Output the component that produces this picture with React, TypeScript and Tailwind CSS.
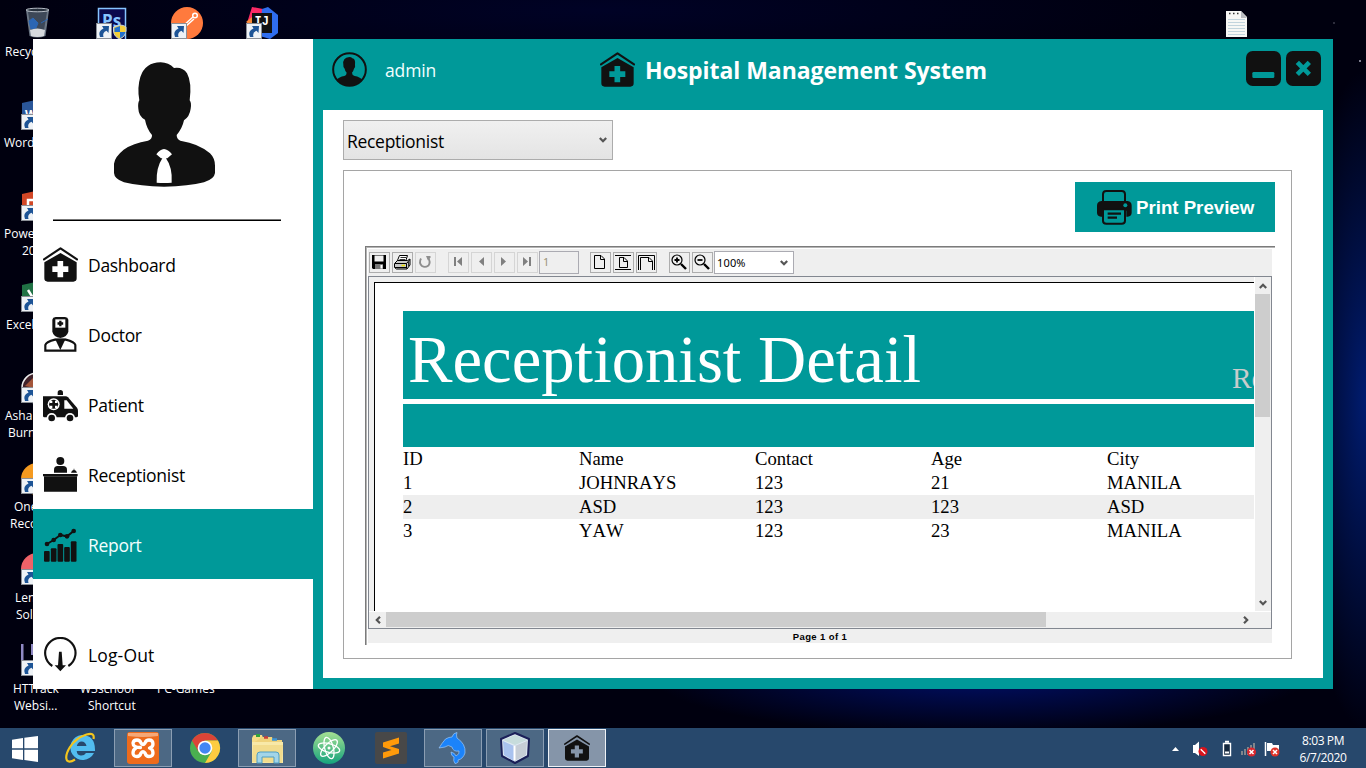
import type { ReactNode } from 'react'

const INK = '#111111'

function HouseIcon({ size = 35 }: { size?: number }) {
  return (
    <svg width={size} height={size} viewBox="0 0 105 105" className="shrink-0">
      <path d="M3 37 L52.5 4 L102 37" fill="none" stroke={INK} strokeWidth="6.500" strokeLinejoin="round" strokeLinecap="round" />
      <path
        fillRule="evenodd"
        fill={INK}
        d="M4 46 L52.5 18 L101 46 V94 Q101 104 91 104 H14 Q4 104 4 94 Z M43.5 42 V58 H28 V75 H43.5 V91 H60.5 V75 H76 V58 H60.5 V42 Z"
      />
    </svg>
  )
}

function DoctorIcon() {
  return (
    <svg width="35" height="35" viewBox="0 0 105 105" className="shrink-0">
      <path d="M28 8 Q29 1 38 0 H66 Q75 1 76 8 V44 Q72 60 52 63 Q32 60 28 44 Z" fill={INK} />
      <path d="M37 7 H67 V32 H37 Z" fill="#fff" />
      <path d="M52 11 V28 M43.500 19.500 H60.500" stroke={INK} strokeWidth="7" />
      <path d="M7 101 V84 Q9 75 36 68 H68 Q95 75 97 84 V101 Z" fill="#fff" stroke={INK} strokeWidth="6.500" />
      <path d="M36 65 H68 L52 99 Z" fill={INK} />
    </svg>
  )
}

function AmbulanceIcon() {
  return (
    <svg width="35" height="35" viewBox="0 0 105 105" className="shrink-0">
      <path d="M44 24 V17 Q44 9 52 9 Q60 9 60 17 V24 Z" fill={INK} />
      <path d="M0 28 H68 Q72 28 75 31 L102 62 Q105 66 105 72 V86 Q105 91 100 91 H4 Q0 91 0 86 Z" fill={INK} />
      <path d="M64 40 H71 L91 65 H64 Z" fill="#fff" />
      <circle cx="32" cy="52" r="18" fill="#fff" />
      <circle cx="32" cy="52" r="13.500" fill={INK} />
      <path d="M21 41 h7 v7 h-7 z M36 41 h7 v7 h-7 z M21 56 h7 v7 h-7 z M36 56 h7 v7 h-7 z" fill="#fff" />
      <circle cx="26" cy="93" r="15" fill="#fff" />
      <circle cx="81" cy="93" r="15" fill="#fff" />
      <circle cx="26" cy="93" r="10" fill={INK} />
      <circle cx="81" cy="93" r="10" fill={INK} />
    </svg>
  )
}

function DeskIcon() {
  return (
    <svg width="35" height="35" viewBox="0 0 105 105" className="shrink-0" fill={INK}>
      <circle cx="52" cy="12" r="12" />
      <path d="M33 47 V38 Q33 27 44 27 H60 Q72 27 72 38 V47 Z" />
      <path d="M84 47 Q86 40 92 39 V35 H94 V39 Q100 40 102 47 Z" />
      <path d="M0 51 H104 V58 H102 V104 H3 V58 H0 Z" />
      <path d="M3 58.500 H102" stroke="#666" strokeWidth="1.500" />
    </svg>
  )
}

function ChartIcon() {
  return (
    <svg width="35" height="35" viewBox="0 0 105 105" className="shrink-0" fill={INK}>
      <rect x="3" y="72" width="17" height="32" rx="3" />
      <rect x="23.500" y="64" width="17" height="40" rx="3" />
      <rect x="43.500" y="51" width="17" height="53" rx="3" />
      <rect x="63.500" y="60" width="17" height="44" rx="3" />
      <rect x="83.500" y="43" width="17" height="61" rx="3" />
      <path d="M12 51 L32 39 L52 24 L72 28 L92 12" fill="none" stroke={INK} strokeWidth="6" />
      <circle cx="12" cy="51" r="7" />
      <circle cx="32" cy="39" r="7" />
      <circle cx="52" cy="24" r="7" />
      <circle cx="72" cy="28" r="7" />
      <circle cx="92" cy="12" r="7" />
    </svg>
  )
}

function LogoutIcon() {
  return (
    <svg width="35" height="35" viewBox="0 0 105 105" className="shrink-0">
      <path d="M28 87 A45.500 45.500 0 1 1 76 87" fill="none" stroke={INK} strokeWidth="6.500" />
      <path d="M48 44 H56 L59 85 H69 L52 103 L35 85 H45 Z" fill={INK} />
    </svg>
  )
}

function AvatarIcon() {
  return (
    <svg width="101" height="125" viewBox="342 185 303 375">
      <path
        fill={INK}
        d="M418 300 Q411 262 421 230 Q436 186 482 186 Q506 187 522 203 Q548 199 561 219 Q576 246 569 300 Q575 307 572 325 Q569 348 552 360 Q547 384 530 404 Q530 416 541 421 Q598 430 630 459 Q645 474 645 496 V518 Q643 536 612 546 Q566 558 492 559 Q420 558 372 546 Q343 536 342 518 V490 Q344 470 371 448 Q399 428 444 421 Q457 416 456 404 Q440 385 435 358 Q416 348 415 325 Q413 308 418 300 Z"
      />
      <path fill="#fff" d="M469 462 Q480 447 492 446 Q504 447 516 462 L502 474 H483 Z M487 474 H498 Q518 502 515 547 Q492 549 470 547 Q468 502 487 474 Z" />
    </svg>
  )
}

function UserIcon() {
  return (
    <svg width="35" height="35" viewBox="0 0 105 105" className="shrink-0">
      <circle cx="52.500" cy="52.500" r="49" fill="none" stroke={INK} strokeWidth="6" />
      <path
        fill={INK}
        d="M34 38 Q31 17 52 15 Q58 15 61 19 Q71 20 69 38 Q71 46 66 50 Q64 58 60 62 Q60 70 68 72 Q84 75 91 83 Q76 101 52 101 Q29 101 14 83 Q21 75 37 72 Q44 70 44 62 Q39 57 38 50 Q33 46 34 38 Z"
      />
    </svg>
  )
}

function PrinterIcon() {
  return (
    <svg width="35" height="35" viewBox="0 0 105 105" className="shrink-0">
      <path d="M18 40 V13 Q18 3 28 3 H74 Q84 3 84 13 V40" fill="none" stroke={INK} strokeWidth="6" />
      <path d="M13 33 H92 Q104 35 104 47 V68 Q104 78 92 80 H88 V62 H15 V80 H12 Q0 78 0 68 V47 Q0 35 13 33 Z" fill={INK} />
      <path d="M18 58 V92 Q18 101 28 101 H74 Q84 101 84 92 V58 Z" fill="#009999" stroke={INK} strokeWidth="6" />
      <circle cx="85" cy="46" r="6" fill="#009999" />
      <path d="M32 71 H72 M32 83 H60" stroke={INK} strokeWidth="7" />
    </svg>
  )
}

const NAV: { label: string; icon: ReactNode; active?: boolean }[] = [
  { label: 'Dashboard', icon: <HouseIcon /> },
  { label: 'Doctor', icon: <DoctorIcon /> },
  { label: 'Patient', icon: <AmbulanceIcon /> },
  { label: 'Receptionist', icon: <DeskIcon /> },
  { label: 'Report', icon: <ChartIcon />, active: true },
]

function NavItem({ label, icon, active }: { label: string; icon: ReactNode; active?: boolean }) {
  return (
    <div className={active ? 'flex h-[70px] bg-[#009999] pl-[10px] text-[#f2ffff]' : 'flex h-[70px] pl-[10px] text-black'}>
      <div className="pt-[18px]">{icon}</div>
      <span className={label === 'Log-Out' ? 'pt-[24px] pl-[10px] text-[17.500px] leading-[25px] tracking-[0.150px]' : 'pt-[24px] pl-[10px] text-[17.500px] leading-[25px] tracking-[-0.300px]'}>{label}</span>
    </div>
  )
}

function ToolButton({ children, off }: { children: ReactNode; off?: boolean }) {
  return (
    <div className={off ? 'size-[21px] border border-[#d5d5d5]' : 'size-[21px] border border-[#adadad]'}>
      <svg width="19" height="19" viewBox="1 1 19 19" className="block">
        {children}
      </svg>
    </div>
  )
}

function Toolbar() {
  return (
    <div className="flex h-[27px] items-center bg-[#efefef] pl-px">
      <div className="flex gap-[2px]">
        <ToolButton>
          <path d="M3 3 H17 V17 H4 L3 16 Z" fill="#000" />
          <path d="M5.500 3.500 H14.500 V9.500 H5.500 Z" fill="#efefef" />
          <path d="M6 12 H14 V17 H6 Z" fill="#777" />
          <path d="M11.500 13 H13.500 V16.500 H11.500 Z" fill="#fff" />
        </ToolButton>
        <ToolButton>
          <path d="M7.500 3.500 H15.500 L13.500 9.500 H5 Z" fill="#fff" stroke="#000" />
          <path d="M8.500 5.500 H14 M7.500 7.500 H13" stroke="#000" strokeWidth="0.800" />
          <path d="M2.500 11.500 L5.500 8.500 H15.500 L18 7 V13 L15 17 H4.500 L2.500 15.500 Z" fill="#c8c8c8" stroke="#000" />
          <path d="M3 11.500 H14.500 M3 15.500 H14.500 M14.500 11.500 V16.500 M14.500 11.500 L17.500 8" stroke="#000" />
          <path d="M9.500 13.500 H13" stroke="#e8e000" strokeWidth="1.500" />
          <path d="M16.500 9 V14.500" stroke="#333" />
        </ToolButton>
        <ToolButton off>
          <path d="M6 6.500 Q3.500 11 7 14 Q10 16 13.500 13.500 Q16 10 13 5.500" fill="none" stroke="#8e8e8e" strokeWidth="1.900" />
          <path d="M11 4 H15.500 V5.500 L13 8.500 Z" fill="#8e8e8e" />
        </ToolButton>
      </div>
      <div className="ml-3 flex gap-[2px]">
        <ToolButton off>
          <path d="M6 5 H8 V14 H6 Z M14 5 V14 L9 9.500 Z" fill="#808080" />
        </ToolButton>
        <ToolButton off>
          <path d="M13 5 V14 L8 9.500 Z" fill="#808080" />
        </ToolButton>
        <ToolButton off>
          <path d="M7 5 V14 L12 9.500 Z" fill="#808080" />
        </ToolButton>
        <ToolButton off>
          <path d="M6 5 V14 L11 9.500 Z M12 5 H14 V14 H12 Z" fill="#808080" />
        </ToolButton>
      </div>
      <div className="ml-px h-[23px] w-[40px] border border-[#ababb2] bg-[#efefef] pl-[3px] font-['Noto_Sans',sans-serif] text-[11px] leading-[20px] text-[#9b9478]">1</div>
      <div className="ml-[11px] flex gap-[2px]">
        <ToolButton>
          <path d="M4.500 3.500 H11 L14.500 7 V16.500 H4.500 Z" fill="#efefef" stroke="#000" />
          <path d="M10.500 3.500 V7.500 H14.500" fill="none" stroke="#000" />
        </ToolButton>
        <ToolButton>
          <path d="M2 3.500 H18 M2 17.500 H18" stroke="#000" />
          <path d="M6.500 5.500 H11 L14.500 9 V15.500 H6.500 Z" fill="#efefef" stroke="#000" />
          <path d="M10.500 5.500 V9.500 H14.500" fill="none" stroke="#000" />
        </ToolButton>
        <ToolButton>
          <path d="M2.500 18 V3.500 H18.500 V18" fill="none" stroke="#000" />
          <path d="M4.500 18 V5.500 H13 L16.500 9 V18" fill="#efefef" stroke="#000" />
          <path d="M12.500 5.500 V9.500 H16.500" fill="none" stroke="#000" />
        </ToolButton>
      </div>
      <div className="ml-3 flex gap-[2px]">
        <ToolButton>
          <circle cx="8" cy="8" r="5" fill="#efefef" stroke="#000" strokeWidth="1.200" />
          <path d="M5.500 8 H10.500 M8 5.500 V10.500" stroke="#000" strokeWidth="1.800" />
          <path d="M12 12 L17 17" stroke="#000" strokeWidth="2.400" />
        </ToolButton>
        <ToolButton>
          <circle cx="8" cy="8" r="5" fill="#efefef" stroke="#000" strokeWidth="1.200" />
          <path d="M5.500 8 H10.500" stroke="#000" strokeWidth="1.800" />
          <path d="M12 12 L17 17" stroke="#000" strokeWidth="2.400" />
        </ToolButton>
      </div>
      <div className="ml-px flex h-[23px] w-[80px] items-center justify-between border border-[#ababb2] bg-white pr-[5px] pl-[2px] font-['Noto_Sans',sans-serif] text-[11px] leading-[19px] text-black">
        <span className="pb-px tracking-[0.150px]">100%</span>
        <Chevron />
      </div>
    </div>
  )
}

function Chevron({ turn = 'rotate-0' }: { turn?: string }) {
  return (
    <svg width="8" height="8" viewBox="0 0 8 8" className={turn}>
      <path d="M0.800 2 L4 5.200 L7.200 2" fill="none" stroke="#555" strokeWidth="2.200" />
    </svg>
  )
}

const ROWS = [
  ['ID', 'Name', 'Contact', 'Age', 'City'],
  ['1', 'JOHNRAYS', '123', '21', 'MANILA'],
  ['2', 'ASD', '123', '123', 'ASD'],
  ['3', 'YAW', '123', '23', 'MANILA'],
]

function ReportPage() {
  return (
    <div className="h-[334px] w-[885px] overflow-hidden bg-[#efefef] pt-[5px] pl-[5px] font-['Liberation_Serif',serif]">
      <div className="h-[329px] w-[880px] border-t border-l border-black bg-white pt-[28px] pl-[28px]">
        <div className="flex h-[88px] w-[851px] overflow-hidden bg-[#009999]">
          <span className="w-[829px] shrink-0 pl-[5px] text-[66.700px] leading-[98px] whitespace-nowrap text-white">Receptionist Detail</span>
          <span className="pt-[51px] text-[29.300px] leading-[33px] text-[#c8cccc]">Re</span>
        </div>
        <div className="h-[5px]" />
        <div className="h-[43px] bg-[#009999]" />
        {ROWS.map((row, i) => (
          <div key={row[0]} className={i === 2 ? 'flex h-6 bg-[#eeeeee]' : 'flex h-6'}>
            {row.map((cell, j) => (
              <span key={j} className="w-[176px] shrink-0 text-[18.670px] leading-[24px] text-black [font-kerning:none]">
                {cell}
              </span>
            ))}
          </div>
        ))}
      </div>
    </div>
  )
}

function Viewer() {
  return (
    <div className="ml-[21px] h-[399px] w-[910px] border-t border-l border-[#7b7b7b]">
      <div className="h-[398px] border-t border-l border-[#b4b4b4] pt-px pl-px">
        <div className="w-[904px] bg-[#efefef]">
          <Toolbar />
          <div className="h-[353px] border border-[#828790]">
            <div className="flex h-[335px] border-b border-white">
              <ReportPage />
              <div className="flex w-[17px] flex-col items-center border-l border-white bg-[#efefef] pb-[4px]">
                <div className="flex h-[17px] items-center"><Chevron turn="rotate-180" /></div>
                <div className="h-[123px] w-[15px] self-start bg-[#cdcdcd]" />
                <div className="mt-auto"><Chevron /></div>
              </div>
            </div>
            <div className="flex h-[16px] items-center">
              <div className="flex w-[17px] justify-center"><Chevron turn="rotate-90" /></div>
              <div className="h-[15px] w-[660px] self-start bg-[#cdcdcd]" />
              <div className="mr-[21px] ml-auto"><Chevron turn="-rotate-90" /></div>
            </div>
          </div>
          <div className="h-[14px] text-center font-['Liberation_Sans',sans-serif] text-[9.500px] leading-[15px] font-bold tracking-[0.400px] text-black">Page 1 of 1</div>
        </div>
      </div>
    </div>
  )
}

function AppWindow() {
  return (
    <div className="absolute top-[39px] left-[33px] flex h-[650px] w-[1300px] bg-[#009999]">
      <aside className="w-[280px] bg-white">
        <div className="h-[180px] pt-[23px] pl-[81px]"><AvatarIcon /></div>
        <div className="mb-[8px] ml-[20px] h-[2px] w-[228px] border-t border-[#777] bg-black" />
        {NAV.map((n) => (
          <NavItem key={n.label} {...n} />
        ))}
        <div className="h-[40px]" />
        <NavItem label="Log-Out" icon={<LogoutIcon />} />
      </aside>
      <main className="flex w-[1020px] flex-col">
        <header className="flex h-[71px] pt-[12px] pr-[12px] pl-[19px]">
          <div className="pt-px"><UserIcon /></div>
          <span className="w-[233px] pt-[7px] pl-[18px] text-[17.500px] leading-[25px] tracking-[-0.150px] text-[#f2ffff]">admin</span>
          <div className="pt-px"><HouseIcon /></div>
          <h1 className="pt-[3px] pl-[10px] text-[23px] leading-[32px] font-bold tracking-[-0.060px] whitespace-nowrap text-white">Hospital Management System</h1>
          <div className="ml-auto flex gap-[5px]">
            <svg width="35" height="35" viewBox="0 0 105 105">
              <rect width="105" height="105" rx="20" fill={INK} />
              <rect x="19" y="63" width="66" height="18" rx="4" fill="#009999" />
            </svg>
            <svg width="35" height="35" viewBox="0 0 105 105">
              <rect width="105" height="105" rx="20" fill={INK} />
              <path d="M34 34 L70 70 M70 34 L34 70" stroke="#009999" strokeWidth="14" />
            </svg>
          </div>
        </header>
        <section className="mr-[10px] ml-[10px] h-[568px] bg-white pt-[10px] pl-[20px]">
          <div className="flex h-[40px] w-[270px] items-center justify-between border border-[#acacac] bg-linear-to-b from-[#f0f0f0] to-[#e4e4e4] pr-[5px] pl-[3px] text-[17.500px] tracking-[-0.300px] text-black">
            <span className="pt-[2px] leading-[25px]">Receptionist</span>
            <Chevron />
          </div>
          <div className="mt-[10px] h-[489px] w-[949px] border border-[#a5a5a5] pt-[11px]">
            <div className="mr-[16px] mb-[14px] ml-auto flex h-[50px] w-[200px] items-center bg-[#009999] pl-[22px]">
              <PrinterIcon />
              <span className="pt-[2px] pl-[4px] font-['Liberation_Sans',sans-serif] text-[18.670px] leading-[24px] font-bold whitespace-nowrap text-white">Print Preview</span>
            </div>
            <Viewer />
          </div>
        </section>
      </main>
    </div>
  )
}

function Shortcut({ x, y }: { x: number; y: number }) {
  return (
    <g transform={`translate(${x} ${y})`}>
      <rect x="0.500" y="0.500" width="15" height="15" fill="#eef2f6" stroke="#8b8f96" />
      <path d="M4 14 Q1.500 8 7.500 5.500 L6 3 L13 3 L12.500 10 L10.500 7.800 Q6 9.500 7.500 14 Z" fill="#1d5496" />
    </g>
  )
}

function DesktopIcons() {
  return (
    <svg width="1366" height="728" viewBox="0 0 1366 728" className="absolute top-0 left-0">
      <path d="M26 10 H49 L45.500 36 Q37.500 39 29.500 36 Z" fill="#6b7684" />
      <path d="M28 12 H47 L44 30 H31 Z" fill="#3d4858" />
      <path d="M29 21 L33 18 L38 23 L36 28 L31 29 Z M41 23 L48 19" fill="#2b66b4" stroke="#2b66b4" />
      <path d="M30 30 Q37 27 45 30 L44 36 Q37 38 31 36 Z" fill="#d6d9dd" />
      <ellipse cx="37.500" cy="10" rx="11.500" ry="1.800" fill="#26303c" stroke="#b6bdc6" />
      <rect x="98.500" y="8.500" width="27" height="32" fill="#0a0a4c" stroke="#86c4ff" strokeWidth="1.500" />
      <text x="102" y="27" fontSize="17" fontWeight="700" fill="#86c4ff" fontFamily="Open Sans, sans-serif">Ps</text>
      <Shortcut x={96} y={23} />
      <path d="M120 25 Q124 25 126 27 V31 Q125 37 120 39 Q114 37 113.500 31 V27 Q117 26 120 25" fill="#f5cf38" stroke="#c9d3dc" />
      <path d="M120 26 V32 H114.500 V28 Z M120 32 H125.500 Q124 37 120 38 Z" fill="#2270cf" />
      <circle cx="187" cy="23" r="16" fill="#ff7a3d" />
      <path d="M183 26 L193 17 M185 27 L194 19" stroke="#fff" strokeWidth="1.500" />
      <circle cx="195" cy="15.500" r="2.300" fill="#ff7a3d" stroke="#fff" strokeWidth="1.500" />
      <Shortcut x={171} y={23} />
      <path d="M247 23 L252 7 L263 9 L266 25 Z" fill="#fb2a66" />
      <path d="M246 22 L252 17 L256 28 Z" fill="#f98b3a" />
      <path d="M262 9 L268 7 L278 15 V33 L270 39 L260 36 Z" fill="#2f6dee" />
      <rect x="252" y="13" width="20" height="20" fill="#111" />
      <text x="254.500" y="25" fontSize="12" fontWeight="700" fill="#fff" fontFamily="Liberation Mono, monospace">IJ</text>
      <Shortcut x={246} y={23} />
      <path d="M1226 11 H1241 L1247 17 V37 H1226 Z" fill="#f7f7f5" />
      <path d="M1241 11 L1247 18 H1241 Z" fill="#b9bcc0" />
      <path d="M1228 19.500 H1245 M1228 22.500 H1245 M1228 25.500 H1245 M1228 28.500 H1245 M1228 31.500 H1245 M1228 34.500 H1245" stroke="#c2d4dd" />
      <path d="M1229 13.500 H1239" stroke="#333" strokeDasharray="1.500 2.500" strokeWidth="1.500" />
      <path d="M22 103 L40 99 V130 H22 Z" fill="#2a5699" />
      <text x="25" y="119" fontSize="12" fontWeight="700" fill="#fff" fontFamily="Open Sans, sans-serif">W</text>
      <path d="M22 194 L40 190 V220 H22 Z" fill="#d24726" />
      <path d="M28 205 V200 H36" fill="none" stroke="#fff" strokeWidth="2.500" />
      <path d="M22 285 L40 281 V312 H22 Z" fill="#207245" />
      <path d="M28 290 L33 298" stroke="#fff" strokeWidth="2.500" />
      <circle cx="37" cy="388" r="15" fill="#41222a" stroke="#eee" strokeWidth="1.500" />
      <path d="M25 386 L34 377 V388 Z" fill="#a3553a" />
      <circle cx="37" cy="479" r="16" fill="#f59a20" />
      <circle cx="37" cy="569" r="16" fill="#ee6268" />
      <path d="M21 644 H23.500 V660 H21 Z M31 644 H34 V655 H31 Z" fill="#8f89c4" />
      <Shortcut x={21} y={114} />
      <Shortcut x={21} y={205} />
      <Shortcut x={21} y={296} />
      <Shortcut x={21} y={387} />
      <Shortcut x={21} y={478} />
      <Shortcut x={21} y={569} />
      <Shortcut x={21} y={660} />
      <circle cx="1360" cy="61" r="1" fill="#aab" />
      <circle cx="1334" cy="23" r="0.800" fill="#667" />
    </svg>
  )
}

const LABELS: [string, string][] = [
  ['Recyc', 'top-[43px] left-[5px]'],
  ['Word', 'top-[134px] left-[4px]'],
  ['Power', 'top-[225px] left-[4px]'],
  ['20', 'top-[242px] left-[22px]'],
  ['Excel', 'top-[316px] left-[6px]'],
  ['Asha', 'top-[407px] left-[5px]'],
  ['Burn', 'top-[424px] left-[8px]'],
  ['One', 'top-[498px] left-[14px]'],
  ['Reco', 'top-[515px] left-[10px]'],
  ['Len', 'top-[589px] left-[15px]'],
  ['Sol', 'top-[606px] left-[16px]'],
  ['HTTrack', 'top-[680px] left-[13px]'],
  ['Websi...', 'top-[697px] left-[14px]'],
  ['W3school', 'top-[680px] left-[80px]'],
  ['Shortcut', 'top-[697px] left-[88px]'],
  ['PC-Games', 'top-[680px] left-[157px]'],
]

function TaskSlot({ children, state = 'idle' }: { children: ReactNode; state?: 'idle' | 'open' | 'front' }) {
  const look = {
    idle: 'flex h-[38px] w-[58px] items-center justify-center border border-transparent',
    open: 'flex h-[38px] w-[58px] items-center justify-center border border-[#8b9eb3] bg-[#4c6884]',
    front: 'flex h-[38px] w-[58px] items-center justify-center border border-[#eef2f6] bg-[#8595a9]',
  }[state]
  return <div className={look}>{children}</div>
}

function Taskbar() {
  return (
    <footer className="absolute bottom-0 left-0 flex h-[40px] w-[1366px] bg-[#27486c] pt-px">
      <div className="flex w-[48px] items-center pl-[12px]">
        <svg width="26" height="26" viewBox="0 0 78 78" fill="#fff">
          <path d="M0 11 L33 6 V37 H0 Z M37 5 L78 0 V37 H37 Z M0 41 H33 V72 L0 67 Z M37 41 H78 V78 L37 72 Z" />
        </svg>
      </div>
      <div className="ml-[4px] flex gap-[4px]">
        <TaskSlot>
          <svg width="32" height="32" viewBox="0 0 32 32">
            <path d="M16.500 3 A12.500 12.500 0 1 0 29 21 H21 Q19 24 15.500 23.500 Q12 23 11.700 19 H30 Q30.500 3 16.500 3 Z M11.800 14 Q13 9.500 16.500 9.500 Q20.500 9.500 21.500 14 Z" fill="#52bdf0" fillRule="evenodd" />
            <path d="M28.500 7 Q30 0 21.500 2.500 Q11 6 5 15 Q-0.500 24 2 28.500 Q4.500 31 10 27.500" fill="none" stroke="#f3c51d" strokeWidth="2.200" />
          </svg>
        </TaskSlot>
        <TaskSlot state="open">
          <svg width="32" height="32" viewBox="0 0 32 32">
            <rect width="32" height="32" rx="3" fill="#ee6b1c" />
            <path d="M1 1 H31 V4 Q16 6 1 4 Z" fill="#f6a877" />
            <path d="M13.500 15.500 Q6 15.500 6 11 Q6.500 8 10 8 Q13 8 14 11 Q16 14 18 11 Q19 8 22 8 Q26 8 26 12 Q26 15 22.500 16 Q26 17 26 21 Q26 24.500 22 24.500 Q19 24.500 18 21 Q16 18.500 14 21 Q13 24.500 10 24.500 Q6 24.500 6 21 Q6 17.500 9 16" fill="none" stroke="#fff" strokeWidth="3.300" strokeLinecap="round" strokeLinejoin="round" />
          </svg>
        </TaskSlot>
        <TaskSlot>
          <svg width="32" height="32" viewBox="0 0 32 32">
            <circle cx="16" cy="16" r="15" fill="#4aaf50" />
            <path d="M3 8.500 A15 15 0 0 1 29 8.500 H16 L9.500 19.700 Z" fill="#dc4437" />
            <path d="M29 8.500 A15 15 0 0 1 16 31 L22.500 19.700 Q25 12 16 8.500 Z" fill="#fdcc41" />
            <circle cx="16" cy="16" r="7.300" fill="#fff" />
            <circle cx="16" cy="16" r="5.700" fill="#4386f3" />
          </svg>
        </TaskSlot>
        <TaskSlot state="open">
          <svg width="34" height="32" viewBox="0 0 34 32">
            <path d="M3 4 Q3 3 5 3 H12 L13 6 H20 V30 H2 V6 Z" fill="#f6dc86" />
            <path d="M12 5 H22 L23 8 H32 V30 H5 L2 12 Z" fill="#efd27a" />
            <path d="M2 10 H33 V31 H2 Z" fill="#f8e9a8" />
            <path d="M2 30 L3 13 H33 L32 31 Z" fill="#f2dc8d" />
            <path d="M6 3.500 H10" stroke="#32a33c" strokeWidth="3" />
            <path d="M14 5.500 H18" stroke="#c8403a" strokeWidth="2.500" />
            <path d="M22 7.500 H27" stroke="#3c95d6" strokeWidth="2.500" />
            <path d="M7 31 V23 Q7 20 10 20 H26 Q29 20 29 23 V31 H24 V25 H12 V31 Z" fill="#a3d5e8" stroke="#4d9ec5" />
          </svg>
        </TaskSlot>
        <TaskSlot>
          <svg width="32" height="32" viewBox="0 0 32 32">
            <defs>
              <linearGradient id="atom" x2="0" y2="1"><stop stopColor="#a5e092" /><stop offset="1" stopColor="#14a37d" /></linearGradient>
            </defs>
            <circle cx="16" cy="16" r="16" fill="url(#atom)" />
            <g fill="none" stroke="#fff" strokeWidth="1.300">
              <ellipse cx="16" cy="16" rx="11" ry="4.300" transform="rotate(15 16 16)" />
              <ellipse cx="16" cy="16" rx="11" ry="4.300" transform="rotate(75 16 16)" />
              <ellipse cx="16" cy="16" rx="11" ry="4.300" transform="rotate(135 16 16)" />
            </g>
            <circle cx="16" cy="16" r="1.500" fill="#fff" />
          </svg>
        </TaskSlot>
        <TaskSlot>
          <svg width="32" height="32" viewBox="0 0 32 32">
            <rect width="32" height="32" rx="2" fill="#484848" />
            <path d="M8 10.500 L24 5.500 V11.500 L15 14.300 L24 17 V21.500 L8 26.500 V20.500 L16.500 18 L8 15 Z" fill="#ff9a0a" />
          </svg>
        </TaskSlot>
        <TaskSlot state="open">
          <svg width="30" height="32" viewBox="0 0 30 32">
            <path d="M1 16 Q4 11 7.500 7 Q11 5 14 5 Q15 1 19 0.500 Q18 3 19 6 Q28 12 27 21 Q25 27 20 28 Q21 31 17 31.500 Q15 29 16 25 Q13 24 13 20 Q17 21 18 24 Q22 22 21 19 Q15 20 14 15 Q10 12 7 15 Z" fill="#1b83fa" stroke="#9cc9f8" strokeWidth="0.700" />
          </svg>
        </TaskSlot>
        <TaskSlot state="open">
          <svg width="32" height="32" viewBox="0 0 32 32">
            <path d="M16 1 L30 7 L29 24 L16 31 L3 24 L2 7 Z" fill="#dfe8f3" stroke="#1b2058" strokeWidth="2" strokeLinejoin="round" />
            <path d="M16 3 L28 8 L16 13 L4 8 Z" fill="#c7dcdc" />
            <path d="M4 9 L15 14 V29 L5 23 Z" fill="#a9c2ee" />
            <path d="M16 14 L28 9 L27 23 L16 29 Z" fill="#c6cdd6" />
            <path d="M15.500 14 V28" stroke="#fff" strokeWidth="2" />
          </svg>
        </TaskSlot>
        <TaskSlot state="front"><HouseIcon size={26} /></TaskSlot>
      </div>
      <svg width="112" height="39" viewBox="1170 729 112 39" className="ml-auto">
        <path d="M1172 751 L1175.500 747 L1179 751 Z" fill="#fff" />
        <path d="M1193 745 H1195 L1199 741.500 V756 L1195 753 H1193 Z" fill="#fff" />
        <circle cx="1203" cy="751.500" r="4.500" fill="#d8141c" />
        <path d="M1200.700 749.200 L1205.300 753.800" stroke="#fff" strokeWidth="1.300" />
        <path d="M1223.500 743.500 H1230.500 V755.500 H1223.500 Z" fill="#14283e" stroke="#fff" strokeWidth="1.400" />
        <path d="M1225 741.800 H1229 M1225 752.500 H1229" stroke="#fff" strokeWidth="2" />
        <path d="M1241 751 h2 v4 h-2 z M1244 749 h2 v6 h-2 z M1247 747 h2 v8 h-2 z M1250 745 h2 v10 h-2 z M1253 743 h2 v12 h-2 z" fill="#81868b" />
        <circle cx="1251.500" cy="752" r="4.500" fill="#d9262d" />
        <path d="M1249.500 750 L1253.500 754 M1253.500 750 L1249.500 754" stroke="#fff" strokeWidth="1.500" />
        <path d="M1265.500 742 V756" stroke="#fff" strokeWidth="1.500" />
        <path d="M1267 743 H1272 L1273 745 H1279 V751 H1267 Z" fill="#fff" />
        <circle cx="1275" cy="752" r="4.500" fill="#df3328" />
        <path d="M1273 750 L1277 754 M1277 750 L1273 754" stroke="#fff" strokeWidth="1.500" />
      </svg>
      <div className="w-[84px] pt-[3px] pr-[2px] text-center text-[12px] leading-[17px] tracking-[-0.400px] text-white">
        <div>8:03 PM</div>
        <div>6/7/2020</div>
      </div>
    </footer>
  )
}

export default function App() {
  return (
    <div className="relative h-[768px] w-[1366px] overflow-hidden bg-[#00000f] bg-[radial-gradient(ellipse_70px_330px_at_1366px_400px,#001c70,transparent),radial-gradient(ellipse_330px_60px_at_980px_675px,#000f68,transparent),radial-gradient(ellipse_600px_70px_at_600px_10px,#000226,transparent)] font-['Open_Sans','Noto_Sans',sans-serif]">
      <DesktopIcons />
      {LABELS.map(([text, place]) => (
        <span key={text} className={`absolute text-[12px] leading-[17px] tracking-[0px] whitespace-nowrap text-white ${place}`}>
          {text}
        </span>
      ))}
      <AppWindow />
      <Taskbar />
    </div>
  )
}
